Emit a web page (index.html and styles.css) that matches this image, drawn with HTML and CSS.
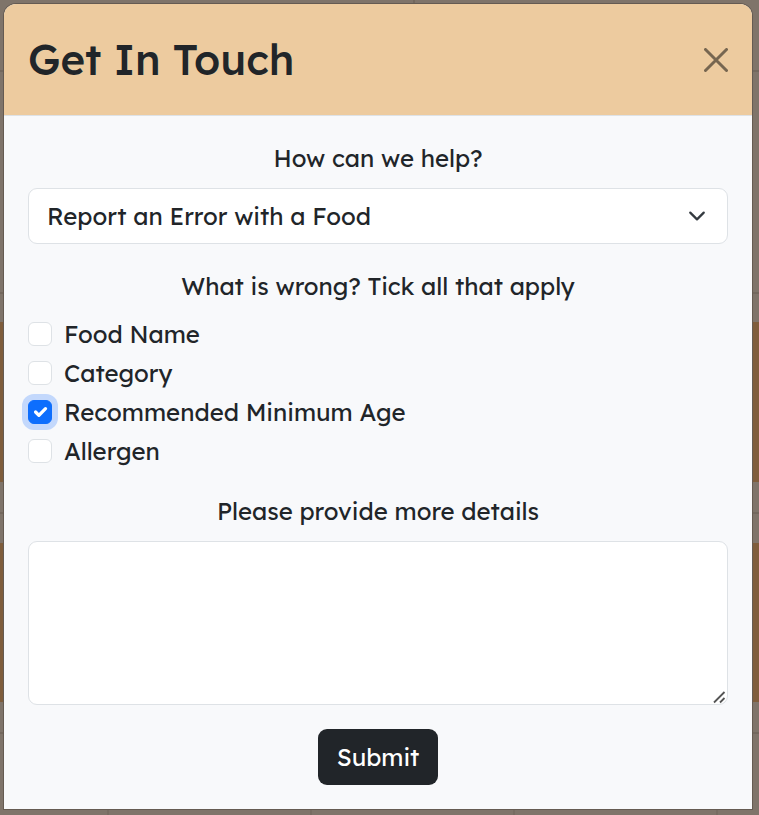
FILE: index.html
```html
<!DOCTYPE html>
<html lang="en">
<head>
<meta charset="utf-8">
<meta name="viewport" content="width=device-width, initial-scale=1">
<title>Get In Touch</title>
<link rel="stylesheet" href="styles.css">
</head>
<body>
<main class="modal" role="dialog" aria-labelledby="title">
  <header class="modal-header">
    <h1 class="modal-title" id="title">Get In Touch</h1>
    <button class="close" type="button" aria-label="Close">
      <svg viewBox="0 0 24 24" aria-hidden="true"><path d="M1.5 1.5l21 21M22.5 1.5l-21 21"/></svg>
    </button>
  </header>
  <form class="modal-body">
    <label class="prompt" for="topic">How can we help?</label>
    <div class="select-wrap">
      <select class="field select" id="topic">
        <option>Report an Error with a Food</option>
      </select>
      <svg class="chevron" viewBox="0 0 16 16" aria-hidden="true"><path d="m2 5 6 6 6-6"/></svg>
    </div>
    <fieldset class="checks">
      <legend class="prompt">What is wrong? Tick all that apply</legend>
      <div class="check"><input type="checkbox" id="name"><label for="name">Food Name</label></div>
      <div class="check"><input type="checkbox" id="category"><label for="category">Category</label></div>
      <div class="check"><input type="checkbox" id="age" checked autofocus><label for="age">Recommended Minimum Age</label></div>
      <div class="check"><input type="checkbox" id="allergen"><label for="allergen">Allergen</label></div>
    </fieldset>
    <label class="prompt" for="details">Please provide more details</label>
    <textarea class="field details" id="details"></textarea>
    <button class="submit" type="submit">Submit</button>
  </form>
</main>
</body>
</html>
```
FILE: styles.css
```css
* {
  box-sizing: border-box;
}

html {
  min-height: 100%;
  background:
    linear-gradient(#7f5d3c, #7f5d3c) 0 322px / 100% 160px no-repeat,
    linear-gradient(#7f5d3c, #7f5d3c) 0 543px / 100% 159px no-repeat,
    linear-gradient(#73685e, #73685e) 0 70px / 100% 2px no-repeat,
    linear-gradient(#73685e, #73685e) 0 292px / 100% 2px no-repeat,
    linear-gradient(#73685e, #73685e) 0 512px / 100% 2px no-repeat,
    linear-gradient(#73685e, #73685e) 0 732px / 100% 2px no-repeat,
    linear-gradient(#73685e, #73685e) 413px 0 / 2px 4px no-repeat,
    linear-gradient(#7f746a, #7f746a) 0 0 / 100% 70px no-repeat,
    repeating-linear-gradient(90deg, #7f746a 0 107px, #776c62 107px 109px, #7f746a 109px 203px);
}

body {
  margin: 0;
  padding: 4px 7px 6px 4px;
  color: #212529;
  font: 24px/39px Lexend, Inter, sans-serif;
}

.modal {
  border-radius: 12px 12px 0 0;
  background: #f8f9fb;
  box-shadow: 0 0 0 1px #655b52;
}

.modal-header {
  display: flex;
  align-items: center;
  justify-content: space-between;
  padding: 24px;
  border-bottom: 1px solid #dee2e6;
  border-radius: 12px 12px 0 0;
  background: #edcb9f;
}

.modal-title {
  margin: 0;
  font-size: 42px;
  font-weight: 500;
  line-height: 63px;
}

.close {
  display: flex;
  padding: 0;
  border: 0;
  background: none;
}

.close svg {
  width: 24px;
  height: 24px;
  fill: none;
  stroke: #776650;
  stroke-width: 3;
  stroke-linecap: round;
}

.modal-body {
  display: flex;
  flex-direction: column;
  padding: 24px;
}

.prompt {
  width: 100%;
  margin-bottom: 12px;
  padding: 0;
  line-height: 36px;
  text-align: center;
}

.field {
  display: block;
  width: 100%;
  border: 1px solid #dee2e6;
  border-radius: 9px;
  background: #fff;
  color: inherit;
  font: inherit;
}

.select-wrap {
  position: relative;
  margin-bottom: 24px;
}

.select {
  height: 56px;
  padding: 8px 56px 8px 18px;
  appearance: none;
}

.chevron {
  position: absolute;
  top: 19px;
  right: 22px;
  width: 18px;
  height: 18px;
  fill: none;
  stroke: #343a40;
  stroke-width: 2;
  stroke-linecap: round;
  stroke-linejoin: round;
  pointer-events: none;
}

.checks {
  min-width: 0;
  margin: 0 0 22px;
  padding: 0;
  border: 0;
}

.checks .prompt {
  margin-bottom: 11px;
}

.check {
  display: flex;
  align-items: flex-start;
  gap: 12px;
}

.check input {
  width: 24px;
  height: 24px;
  margin: 7px 0 0;
  border: 1px solid #dee2e6;
  border-radius: 6px;
  background: #fff;
  appearance: none;
}

.check input:checked {
  border-color: #0d6efd;
  background: #0d6efd url("data:image/svg+xml,%3Csvg xmlns='http://www.w3.org/2000/svg' viewBox='0 0 20 20'%3E%3Cpath fill='none' stroke='%23fff' stroke-linecap='round' stroke-linejoin='round' stroke-width='3' d='m6 10 3 3 6-6'/%3E%3C/svg%3E") center / 22px no-repeat;
}

.check input:focus {
  outline: 0;
  box-shadow: 0 0 0 6px #c3d8fc;
}

.details {
  height: 164px;
  margin-bottom: 24px;
  padding: 8px 18px;
  resize: vertical;
}

.details::-webkit-resizer {
  background: url("data:image/svg+xml,%3Csvg xmlns='http://www.w3.org/2000/svg' viewBox='0 0 15 15'%3E%3Cpath fill='none' stroke='%23555' stroke-width='1.8' d='M2 13.5 12.5 3M8 13.5 12.5 9'/%3E%3C/svg%3E") center / 15px no-repeat;
}

.submit {
  align-self: center;
  padding: 9px 19px;
  border: 0;
  border-radius: 9px;
  background: #212529;
  color: #fff;
  font: inherit;
  line-height: 38px;
}
```
